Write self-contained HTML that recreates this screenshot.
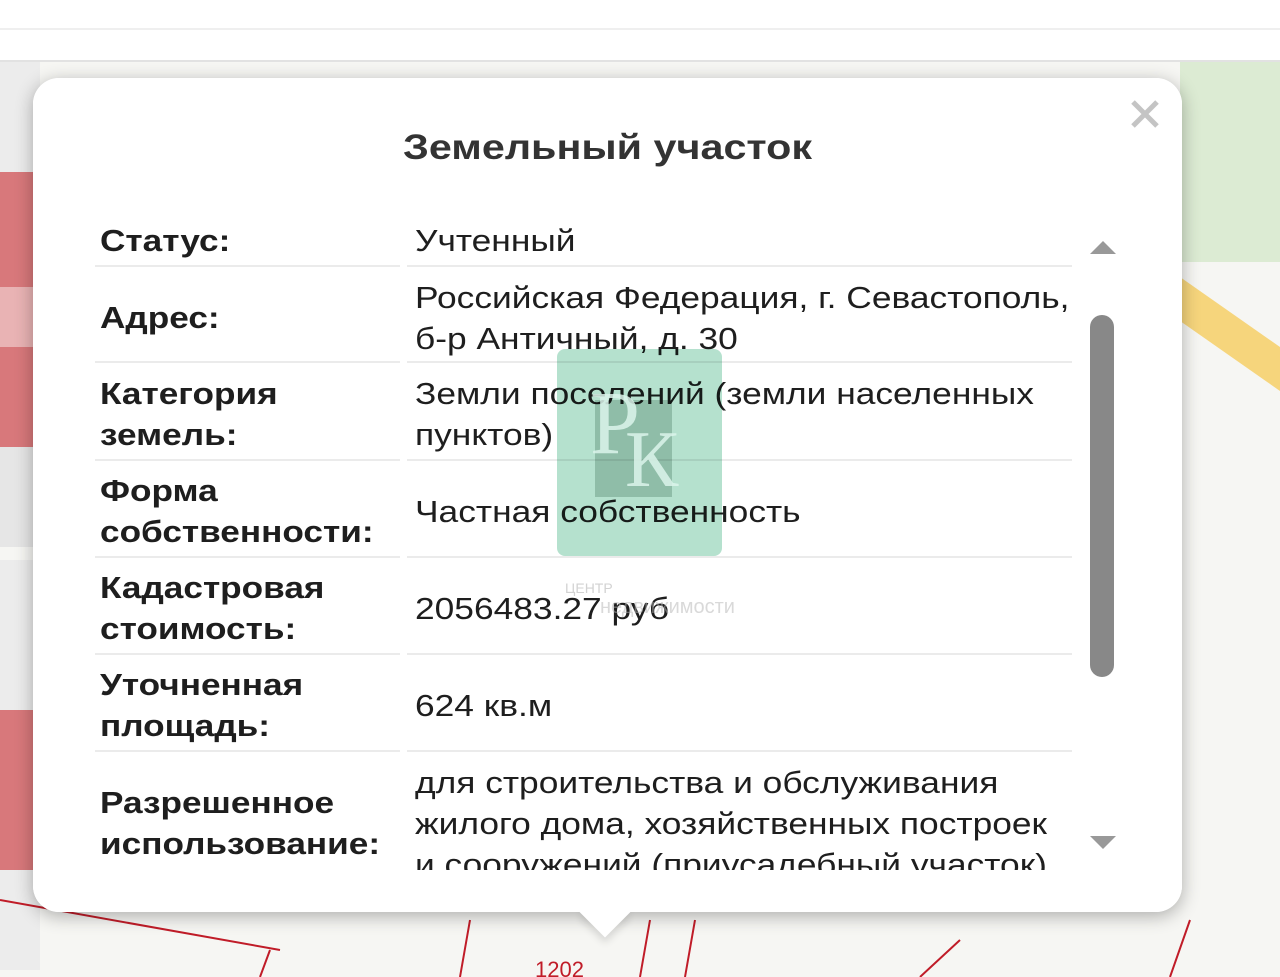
<!DOCTYPE html>
<html><head><meta charset="utf-8"><style>
body{margin:0;width:1280px;height:977px;overflow:hidden;position:relative;background:#f6f6f3;font-family:"Liberation Sans",sans-serif}
.a{position:absolute}
.lbl{position:absolute;left:100px;font-weight:bold;font-size:31px;line-height:41px;color:#1e1e1e;white-space:nowrap;transform:scaleX(1.135);transform-origin:0 0}
.val{position:absolute;left:415px;font-size:31px;line-height:41px;color:#1e1e1e;white-space:nowrap;transform:scaleX(1.14);transform-origin:0 0}
.hr{position:absolute;height:2px;background:#ebebeb}
</style></head><body>
<div class="a" style="left:0;top:0;width:1280px;height:62px;background:#fff"></div>
<div class="a" style="left:0;top:28px;width:1280px;height:2px;background:#efefef"></div>
<div class="a" style="left:0;top:60px;width:1280px;height:2px;background:#e2e2e2"></div>
<div class="a" style="left:0;top:62px;width:40px;height:110px;background:#ececec"></div>
<div class="a" style="left:0;top:172px;width:40px;height:115px;background:#d8787b"></div>
<div class="a" style="left:0;top:287px;width:40px;height:60px;background:#e9b3b4"></div>
<div class="a" style="left:0;top:347px;width:40px;height:100px;background:#d8787b"></div>
<div class="a" style="left:0;top:447px;width:40px;height:100px;background:#e6e6e6"></div>
<div class="a" style="left:0;top:560px;width:40px;height:150px;background:#ececec"></div>
<div class="a" style="left:0;top:710px;width:40px;height:160px;background:#d8787b"></div>
<div class="a" style="left:0;top:870px;width:40px;height:100px;background:#ececec"></div>
<div class="a" style="left:1180px;top:62px;width:100px;height:200px;background:#dcebd3"></div>
<div class="a" style="left:1150px;top:330px;width:200px;height:36px;background:#f6d57c;transform:rotate(35deg)"></div>
<svg class="a" style="left:0;top:880px" width="1280" height="97"><g stroke="#c01c28" stroke-width="2" fill="none"><path d="M0 20 L280 70 M270 70 L260 97 M470 40 L460 97 M650 40 L640 97 M695 40 L685 97 M1190 40 L1170 97 M960 60 L920 97"/></g><text x="535" y="97" font-size="22" fill="#c01c28" font-family="Liberation Sans">1202</text></svg>
<div class="a" style="left:33px;top:78px;width:1149px;height:834px;background:#fff;border-radius:26px;box-shadow:0 4px 18px rgba(0,0,0,.3)"></div>
<div class="a" style="left:587px;top:894px;width:36px;height:36px;background:#fff;transform:rotate(45deg);box-shadow:4px 4px 8px rgba(0,0,0,.12)"></div>
<div class="a" style="left:33px;top:78px;width:1149px;height:834px;background:#fff;border-radius:26px"></div>
<svg class="a" style="left:1130px;top:99px" width="30" height="30"><path d="M3 3 L27 27 M27 3 L3 27" stroke="#c4c4c4" stroke-width="5"/></svg>
<div class="a" style="left:403px;top:128px;font-weight:bold;font-size:35px;color:#333;white-space:nowrap;transform:scaleX(1.18);transform-origin:0 0">Земельный участок</div>
<div class="a" style="left:0;top:0;width:1280px;height:870px;overflow:hidden">
<div class="lbl" style="top:220px">Статус:</div><div class="val" style="top:220px">Учтенный</div>
<div class="hr" style="left:95px;top:265px;width:305px"></div><div class="hr" style="left:407px;top:265px;width:665px"></div>
<div class="lbl" style="top:297px">Адрес:</div><div class="val" style="top:277px">Российская Федерация, г. Севастополь,<br>б-р Античный, д. 30</div>
<div class="hr" style="left:95px;top:361px;width:305px"></div><div class="hr" style="left:407px;top:361px;width:665px"></div>
<div class="lbl" style="top:373px">Категория<br>земель:</div><div class="val" style="top:373px">Земли поселений (земли населенных<br>пунктов)</div>
<div class="hr" style="left:95px;top:459px;width:305px"></div><div class="hr" style="left:407px;top:459px;width:665px"></div>
<div class="lbl" style="top:470px">Форма<br>собственности:</div><div class="val" style="top:491px">Частная собственность</div>
<div class="hr" style="left:95px;top:556px;width:305px"></div><div class="hr" style="left:407px;top:556px;width:665px"></div>
<div class="lbl" style="top:567px">Кадастровая<br>стоимость:</div><div class="val" style="top:588px">2056483.27 руб</div>
<div class="hr" style="left:95px;top:653px;width:305px"></div><div class="hr" style="left:407px;top:653px;width:665px"></div>
<div class="lbl" style="top:664px">Уточненная<br>площадь:</div><div class="val" style="top:685px">624 кв.м</div>
<div class="hr" style="left:95px;top:750px;width:305px"></div><div class="hr" style="left:407px;top:750px;width:665px"></div>
<div class="lbl" style="top:782px">Разрешенное<br>использование:</div><div class="val" style="top:762px">для строительства и обслуживания<br>жилого дома, хозяйственных построек<br>и сооружений (приусадебный участок)</div>
</div>
<div class="a" style="left:1090px;top:241px;width:0;height:0;border-left:13px solid transparent;border-right:13px solid transparent;border-bottom:13px solid #999"></div>
<div class="a" style="left:1090px;top:315px;width:24px;height:362px;background:#888;border-radius:12px"></div>
<div class="a" style="left:1090px;top:836px;width:0;height:0;border-left:13px solid transparent;border-right:13px solid transparent;border-top:13px solid #999"></div>
<div class="a" style="left:557px;top:349px;width:165px;height:207px;background:rgba(120,200,165,.55);border-radius:8px;mix-blend-mode:multiply"></div>
<div class="a" style="left:595px;top:400px;width:77px;height:97px;background:rgba(100,140,120,.35);mix-blend-mode:multiply"></div>
<div class="a" style="left:590px;top:372px;font-family:'Liberation Serif',serif;font-size:90px;color:rgba(220,245,235,.85)">Р</div>
<div class="a" style="left:625px;top:415px;font-family:'Liberation Serif',serif;font-size:80px;color:rgba(220,245,235,.85)">К</div>
<div class="a" style="left:565px;top:580px;font-size:14px;color:rgba(180,180,180,.6)">ЦЕНТР</div>
<div class="a" style="left:600px;top:596px;font-size:20px;color:rgba(180,180,180,.5)">недвижимости</div>
</body></html>
